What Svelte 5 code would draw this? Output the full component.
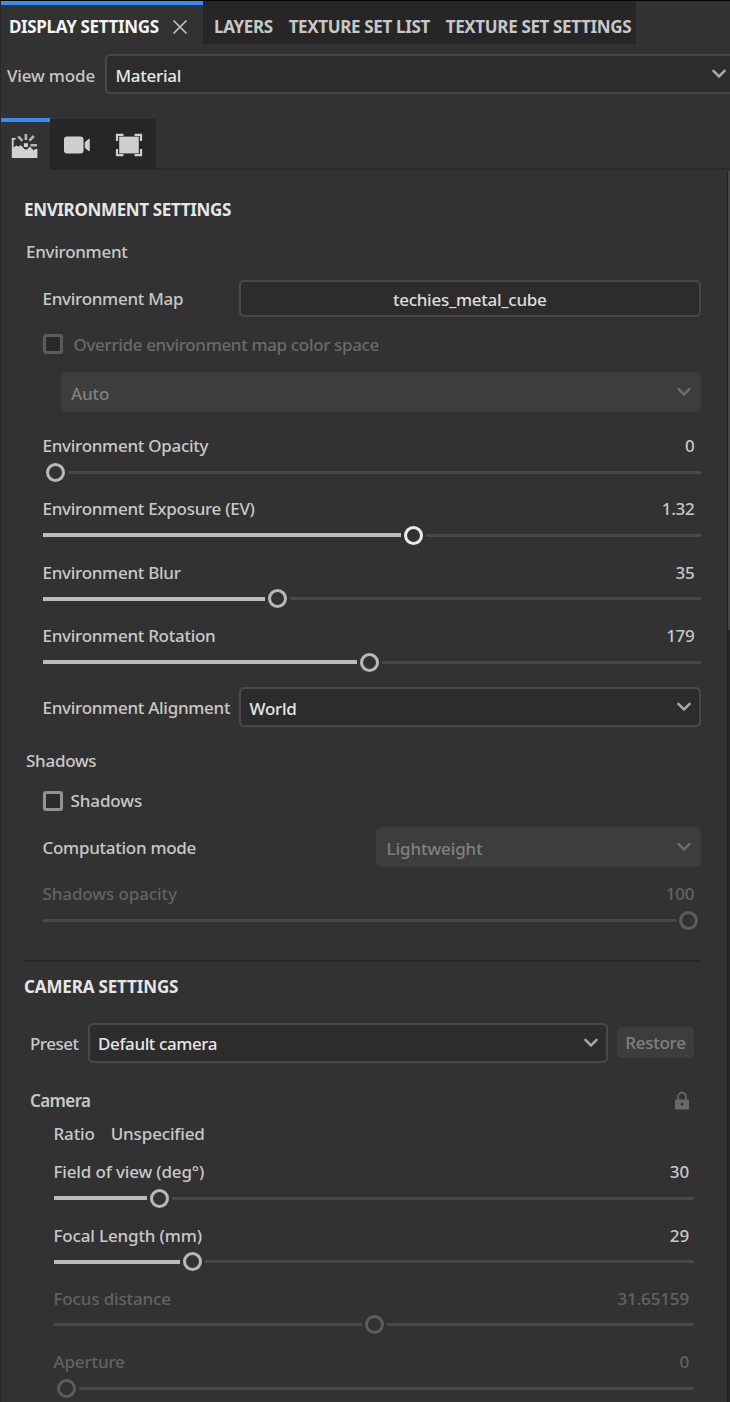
<script>
    const tabs = ['LAYERS', 'TEXTURE SET LIST', 'TEXTURE SET SETTINGS'];

    // position is the share of the track on the left of the handle
    const environmentSliders = [
        { label: 'Environment Opacity', value: '0', position: 0 },
        { label: 'Environment Exposure (EV)', value: '1.32', position: 0.566, hover: true },
        { label: 'Environment Blur', value: '35', position: 0.3515 },
        { label: 'Environment Rotation', value: '179', position: 0.4976 }
    ];

    const shadowOpacity = { label: 'Shadows opacity', value: '100', position: 1, disabled: true };

    const cameraSliders = [
        { label: 'Field of view (deg°)', value: '30', position: 0.1526 },
        { label: 'Focal Length (mm)', value: '29', position: 0.2053 },
        { label: 'Focus distance', value: '31.65159', position: 0.5016, disabled: true },
        { label: 'Aperture', value: '0', position: 0, disabled: true }
    ];
</script>

{#snippet slider(item)}
    <div class="slider" class:disabled={item.disabled} class:hover={item.hover}>
        <div class="slider-text">
            <span>{item.label}</span>
            <span>{item.value}</span>
        </div>
        <div class="track">
            <div class="fill" style="width: calc((100% - 25px) * {item.position})"></div>
            <div class="handle"></div>
            <div class="rest"></div>
        </div>
    </div>
{/snippet}

{#snippet select(text, disabled)}
    <div class="select" class:disabled>
        <span>{text}</span>
        <svg width="16" height="12" viewBox="0 0 16 12">
            <path d="M2.4 2.8 L8 8.4 L13.6 2.8" fill="none" stroke="currentColor" stroke-width="2.5" stroke-linecap="round" />
        </svg>
    </div>
{/snippet}

<div class="panel">
    <div class="tab-bar">
        <div class="tab active">
            <span>DISPLAY SETTINGS</span>
            <svg width="16" height="16" viewBox="0 0 16 16">
                <path d="M1.5 1.5 L14.5 14.5 M14.5 1.5 L1.5 14.5" stroke="#c4c4c4" stroke-width="1.6" />
            </svg>
        </div>
        <div class="other-tabs">
            {#each tabs as tab}
                <span>{tab}</span>
            {/each}
        </div>
    </div>

    <div class="view-mode">
        <span class="view-label">View mode</span>
        {@render select('Material', false)}
    </div>

    <div class="icon-tabs">
        <div class="icon-tab active">
            <svg width="28" height="26" viewBox="0 0 28 26">
                <path d="M0.8 25 V5 H4.6 V6.8 H2.6 V14.5 L5.5 12.5 L7.5 13.8 L9.5 12 L14 16.6 L16 16.6 L19 13.4 L22.5 17.5 L24.2 16 H26.4 V25 Z" fill="#d2d2d2" />
                <rect x="12.9" y="10.2" width="4" height="3.8" fill="#d2d2d2" />
                <path d="M14.9 1 V7 M7.2 3.4 L11.4 7.8 M22.8 3 L18.4 7.6 M19.4 12.2 H26" stroke="#b4b4b4" stroke-width="2.6" fill="none" />
            </svg>
        </div>
        <div class="icon-tab">
            <svg width="28" height="20" viewBox="0 0 28 20">
                <rect x="1" y="1.5" width="19.5" height="17" rx="3" fill="#cfcfcf" />
                <path d="M22.2 7.2 L26.2 4.2 V15.8 L22.2 12.8 Z" fill="#cfcfcf" stroke="#cfcfcf" stroke-linejoin="round" />
            </svg>
        </div>
        <div class="icon-tab">
            <svg width="28" height="24" viewBox="0 0 28 24">
                <rect x="4.2" y="3.6" width="19.6" height="16.8" fill="#cfcfcf" />
                <path d="M2 8 V1.8 H8.5 M19.5 1.8 H26 V8 M26 16 V22.2 H19.5 M8.5 22.2 H2 V16" fill="none" stroke="#cfcfcf" stroke-width="2.2" />
            </svg>
        </div>
        <div class="tab-line"></div>
    </div>

    <div class="body">
        <div class="content">
            <h2>ENVIRONMENT SETTINGS</h2>
            <h3>Environment</h3>

            <div class="group">
                <div class="field map">
                    <span class="field-label">Environment Map</span>
                    <div class="map-button">techies_metal_cube</div>
                </div>
                <div class="check override">
                    <div class="box"></div>
                    <span>Override environment map color space</span>
                </div>
                <div class="color-space">
                    {@render select('Auto', true)}
                </div>
                {#each environmentSliders as item}
                    {@render slider(item)}
                {/each}
                <div class="field alignment">
                    <span class="field-label">Environment Alignment</span>
                    {@render select('World', false)}
                </div>
            </div>

            <h3 class="shadows-title">Shadows</h3>
            <div class="group">
                <div class="check">
                    <div class="box"></div>
                    <span>Shadows</span>
                </div>
                <div class="field computation">
                    <span class="field-label">Computation mode</span>
                    {@render select('Lightweight', true)}
                </div>
                {@render slider(shadowOpacity)}
            </div>

            <div class="separator"></div>

            <h2 class="camera-title">CAMERA SETTINGS</h2>
            <div class="camera">
                <div class="preset">
                    <span class="preset-label">Preset</span>
                    {@render select('Default camera', false)}
                    <div class="restore">Restore</div>
                </div>
                <div class="camera-head">
                    <span>Camera</span>
                    <svg width="16" height="20" viewBox="0 0 16 20">
                        <path d="M4.2 9 V5.5 A3.8 3.8 0 0 1 11.8 5.5 V9" fill="none" stroke="#696969" stroke-width="1.8" />
                        <path fill-rule="evenodd" d="M2 8.5 H14 Q15 8.5 15 9.5 V17.5 Q15 18.5 14 18.5 H2 Q1 18.5 1 17.5 V9.5 Q1 8.5 2 8.5 Z M8 11.8 A1.4 1.4 0 0 0 8 14.6 A1.4 1.4 0 0 0 8 11.8 Z" fill="#696969" />
                    </svg>
                </div>
                <div class="camera-group">
                    <div class="ratio">
                        <span>Ratio</span>
                        <span>Unspecified</span>
                    </div>
                    {#each cameraSliders as item}
                        {@render slider(item)}
                    {/each}
                </div>
            </div>
        </div>
        <div class="scrollbar">
            <div class="scroll-thumb"></div>
        </div>
    </div>
</div>

<style>
    :global(body) {
        background: #323232;
    }

    .panel {
        box-sizing: border-box;
        width: 730px;
        height: 1402px;
        overflow: hidden;
        display: flex;
        flex-direction: column;
        border-top: 1px solid #050505;
        border-left: 1px solid #272727;
        background: #323232;
        color: #c8c8c8;
        font-family: "Noto Sans", sans-serif;
        font-size: 17px;
        font-weight: 500;
        letter-spacing: -0.28px;
        line-height: 26px;
        white-space: nowrap;
    }

    svg {
        display: block;
        flex: none;
    }

    /* top tabs */
    .tab-bar {
        display: flex;
        flex: none;
        height: 43px;
        font-weight: 700;
        letter-spacing: -0.35px;
    }
    .tab {
        box-sizing: border-box;
        display: flex;
        align-items: center;
        gap: 13px;
        width: 202px;
        padding: 4px 0 0 8px;
        border-top: 4px solid #378ef0;
        color: #f4f4f4;
    }
    .tab span {
        width: 150px;
    }
    .other-tabs {
        box-sizing: border-box;
        display: flex;
        align-items: center;
        gap: 15.8px;
        width: 433px;
        padding: 8px 0 0 11px;
        background: #262626;
    }

    .view-mode {
        display: flex;
        flex: none;
        align-items: center;
        height: 40px;
        margin-top: 10px;
        padding-left: 6px;
    }
    .view-label {
        flex: none;
        width: 98px;
        padding-top: 3px;
        letter-spacing: -0.15px;
    }
    .view-mode .select {
        flex: none;
        width: 630px;
        padding-right: 6px;
    }

    .select {
        box-sizing: border-box;
        display: flex;
        flex: 1;
        align-items: center;
        justify-content: space-between;
        height: 40px;
        padding: 3px 7px 0 8.5px;
        border: 2px solid #484848;
        border-radius: 5px;
        background: #2c2c2c;
        color: #e6e6e6;
    }
    .select svg {
        margin-top: -3px;
        color: #a8a8a8;
    }
    .select.disabled {
        border-color: #3d3d3d;
        background: #3d3d3d;
        color: #808080;
        letter-spacing: -0.1px;
    }
    .select.disabled svg {
        color: #6c6c6c;
    }

    /* environment / camera / viewport switch */
    .icon-tabs {
        display: flex;
        flex: none;
        height: 52px;
        margin-top: 24px;
    }
    .icon-tab {
        box-sizing: border-box;
        display: flex;
        align-items: center;
        justify-content: center;
        width: 53px;
        background: #262626;
        border-top: 1px solid #323232;
    }
    .icon-tab:nth-child(3) {
        padding-right: 1px;
    }
    .icon-tab.active {
        width: 49px;
        padding-right: 2px;
        border-top: 4px solid #378ef0;
        background: none;
    }
    .tab-line {
        flex: 1;
        border-bottom: 2px solid #2a2a2a;
    }

    .body {
        display: flex;
        flex: 1;
        min-height: 0;
    }
    .content {
        flex: none;
        width: 676.5px;
        padding: 27px 26.5px 0 23px;
    }

    h2, h3 {
        margin: 0;
        font-size: 17px;
        line-height: 26px;
    }
    h2 {
        color: #e6e6e6;
        font-weight: 700;
        letter-spacing: -0.35px;
    }
    h3 {
        margin: 16px 0 0 2px;
        font-weight: 500;
    }

    .group {
        padding-left: 18.5px;
    }
    .field {
        display: flex;
        align-items: center;
        height: 40px;
    }
    .field.map {
        margin-top: 13px;
    }
    .field-label {
        flex: none;
        width: 196.5px;
        padding-top: 2px;
    }
    .map-button {
        box-sizing: border-box;
        flex: 1;
        height: 37px;
        border: 2px solid #484848;
        border-radius: 5px;
        background: #2c2c2c;
        color: #dcdcdc;
        line-height: 35px;
        text-align: center;
    }

    .check {
        display: flex;
        align-items: center;
        gap: 8px;
        height: 26px;
        margin-top: 14px;
    }
    .check span {
        letter-spacing: -0.1px;
    }
    .box {
        box-sizing: border-box;
        width: 20px;
        height: 20px;
        border: 3px solid #929292;
        border-radius: 3px;
        background: #2a2a2a;
    }
    .check.override {
        gap: 11px;
        margin-top: 13px;
        color: #6a6a6a;
    }
    .check.override span {
        padding-top: 1px;
        letter-spacing: -0.34px;
    }
    .override .box {
        border-color: #5c5c5c;
    }
    .color-space {
        display: flex;
        margin: 15px 0 21px 18px;
    }

    .slider {
        height: 63.35px;
    }
    .slider-text {
        display: flex;
        justify-content: space-between;
        height: 26px;
        padding-right: 6px;
    }
    .track {
        display: flex;
        align-items: center;
        height: 26px;
    }
    .fill {
        height: 4px;
        flex: none;
        background: #bcbcbc;
    }
    .handle {
        box-sizing: border-box;
        flex: none;
        width: 19px;
        height: 19px;
        margin: 0 3px;
        border: 3.5px solid #b8b8b8;
        border-radius: 50%;
    }
    .rest {
        flex: 1;
        height: 3px;
        background: #484848;
    }
    .hover .handle {
        border-color: #ebebeb;
    }
    .slider.disabled {
        color: #626262;
        letter-spacing: -0.1px;
    }
    .slider.disabled .fill {
        height: 3px;
        background: #484848;
    }
    .slider.disabled .handle {
        border-color: #5c5c5c;
    }

    .alignment {
        margin-top: 1px;
    }
    .shadows-title {
        margin-top: 21px;
    }
    .computation {
        margin: 13px 0 14px;
    }
    .computation .field-label {
        width: 333.5px;
    }

    .separator {
        height: 2px;
        margin-top: 15px;
        background: #282828;
    }
    .camera-title {
        margin-top: 12px;
        letter-spacing: -0.15px;
    }
    .camera {
        padding: 0 6.5px 0 6px;
    }
    .preset {
        display: flex;
        align-items: center;
        margin-top: 23px;
    }
    .preset-label {
        width: 57.5px;
        padding-top: 2px;
        letter-spacing: -0.5px;
    }
    .preset :global(.select span) {
        letter-spacing: -0.4px;
    }
    .restore {
        width: 77px;
        height: 31px;
        margin-left: 9px;
        border-radius: 4px;
        background: #3d3d3d;
        color: #808080;
        line-height: 32px;
        text-align: center;
    }
    .camera-head {
        display: flex;
        align-items: center;
        justify-content: space-between;
        height: 26px;
        margin-top: 25px;
        padding-right: 4px;
        font-weight: 600;
        letter-spacing: -0.6px;
    }
    .camera-group {
        padding-left: 23.5px;
    }
    .ratio {
        display: flex;
        gap: 16px;
        margin: 7px 0 12.5px;
        letter-spacing: -0.15px;
    }
    .camera-group .slider {
        letter-spacing: -0.15px;
    }
    .camera-group .slider-text {
        padding-right: 5px;
    }

    .scrollbar {
        box-sizing: border-box;
        flex: none;
        width: 3px;
        margin-top: 1px;
        border-left: 1px solid #222;
        background: #262626;
    }
    .scroll-thumb {
        height: 459px;
        background: #464646;
    }
</style>
